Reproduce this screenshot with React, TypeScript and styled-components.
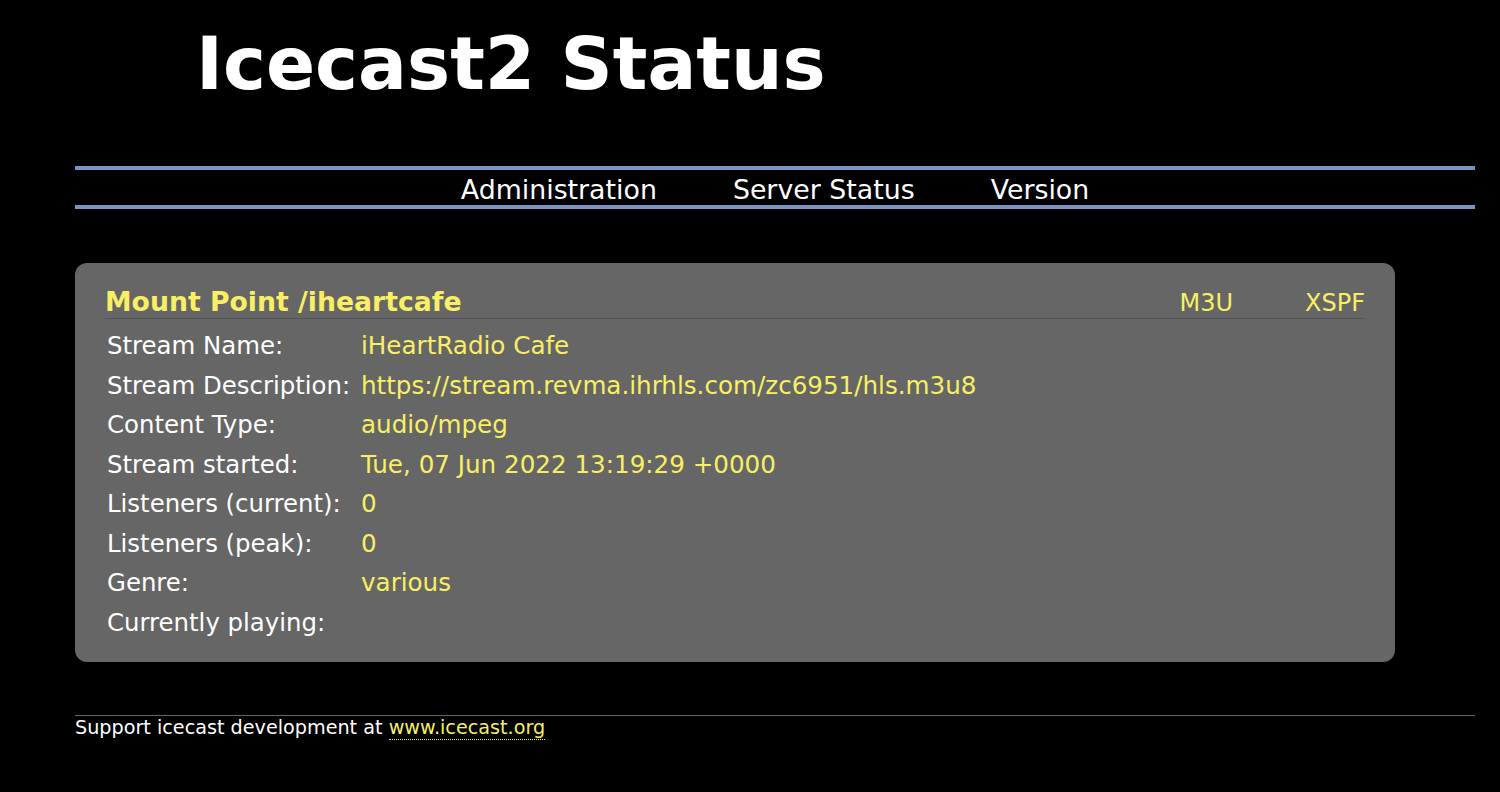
import React from "react";
import styled, { createGlobalStyle } from "styled-components";

const Global = createGlobalStyle`
  html, body { margin: 0; padding: 0; background: #000; }
  body {
    color: #fff;
    font-family: "DejaVu Sans", Verdana, sans-serif;
  }
`;

const Page = styled.div`
  padding: 0 25px 40px 75px;
`;

const Heading = styled.h1`
  margin: 0;
  padding: 22px 0 0 121px;
  font-size: 72.5px;
  font-weight: bold;
  line-height: 84px;
  color: #fff;
`;

const Nav = styled.nav`
  margin-top: 60px;
  border-top: 4px solid #7b93c5;
  border-bottom: 4px solid #7b93c5;
  display: flex;
  justify-content: center;
  gap: 76px;
  height: 35px;
  align-items: center;
`;

const NavLink = styled.a`
  color: #fff;
  text-decoration: none;
  font-size: 26.8px;
  line-height: 35px;
  padding-top: 3px;
`;

const Card = styled.section`
  margin-top: 54px;
  width: 1320px;
  box-sizing: border-box;
  background: #666;
  border-radius: 12px;
  padding: 23px 30px 20px 30px;
`;

const CardHeader = styled.div`
  display: flex;
  align-items: baseline;
  justify-content: space-between;
  border-bottom: 1px solid #555;
  margin-bottom: 7px;
`;

const MountTitle = styled.h3`
  margin: 0;
  font-size: 26.7px;
  font-weight: bold;
  line-height: 32px;
  color: #f8ef64;
`;

const Playlists = styled.div`
  display: flex;
  gap: 72px;
`;

const YellowLink = styled.a`
  color: #f8ef64;
  text-decoration: none;
  font-size: 24px;
`;

const Rows = styled.div`
  display: grid;
  grid-template-columns: 254px 1fr;
  padding-left: 2px;
`;

const Label = styled.div`
  font-size: 24.4px;
  line-height: 39.5px;
  color: #fff;
  white-space: nowrap;
`;

const Value = styled.div`
  font-size: 24.6px;
  line-height: 39.5px;
  color: #f8ef64;
  white-space: nowrap;
`;

const Footer = styled.footer`
  margin-top: 53px;
  border-top: 1px solid #666;
  font-size: 19.2px;
  line-height: 22px;
  padding-top: 1px;
`;

const FooterLink = styled.a`
  color: #f8ef64;
  text-decoration: none;
  border-bottom: 1px dotted #f8ef64;
`;

const rows: [string, string][] = [
  ["Stream Name:", "iHeartRadio Cafe"],
  ["Stream Description:", "https://stream.revma.ihrhls.com/zc6951/hls.m3u8"],
  ["Content Type:", "audio/mpeg"],
  ["Stream started:", "Tue, 07 Jun 2022 13:19:29 +0000"],
  ["Listeners (current):", "0"],
  ["Listeners (peak):", "0"],
  ["Genre:", "various"],
  ["Currently playing:", ""],
];

export default function App() {
  return (
    <>
      <Global />
      <Page>
        <Heading>Icecast2 Status</Heading>
        <Nav>
          <NavLink href="#">Administration</NavLink>
          <NavLink href="#">Server Status</NavLink>
          <NavLink href="#">Version</NavLink>
        </Nav>
        <Card>
          <CardHeader>
            <MountTitle>Mount Point /iheartcafe</MountTitle>
            <Playlists>
              <YellowLink href="#">M3U</YellowLink>
              <YellowLink href="#">XSPF</YellowLink>
            </Playlists>
          </CardHeader>
          <Rows>
            {rows.map(([k, v]) => (
              <React.Fragment key={k}>
                <Label>{k}</Label>
                <Value>{v}</Value>
              </React.Fragment>
            ))}
          </Rows>
        </Card>
        <Footer>
          Support icecast development at <FooterLink href="#">www.icecast.org</FooterLink>
        </Footer>
      </Page>
    </>
  );
}
